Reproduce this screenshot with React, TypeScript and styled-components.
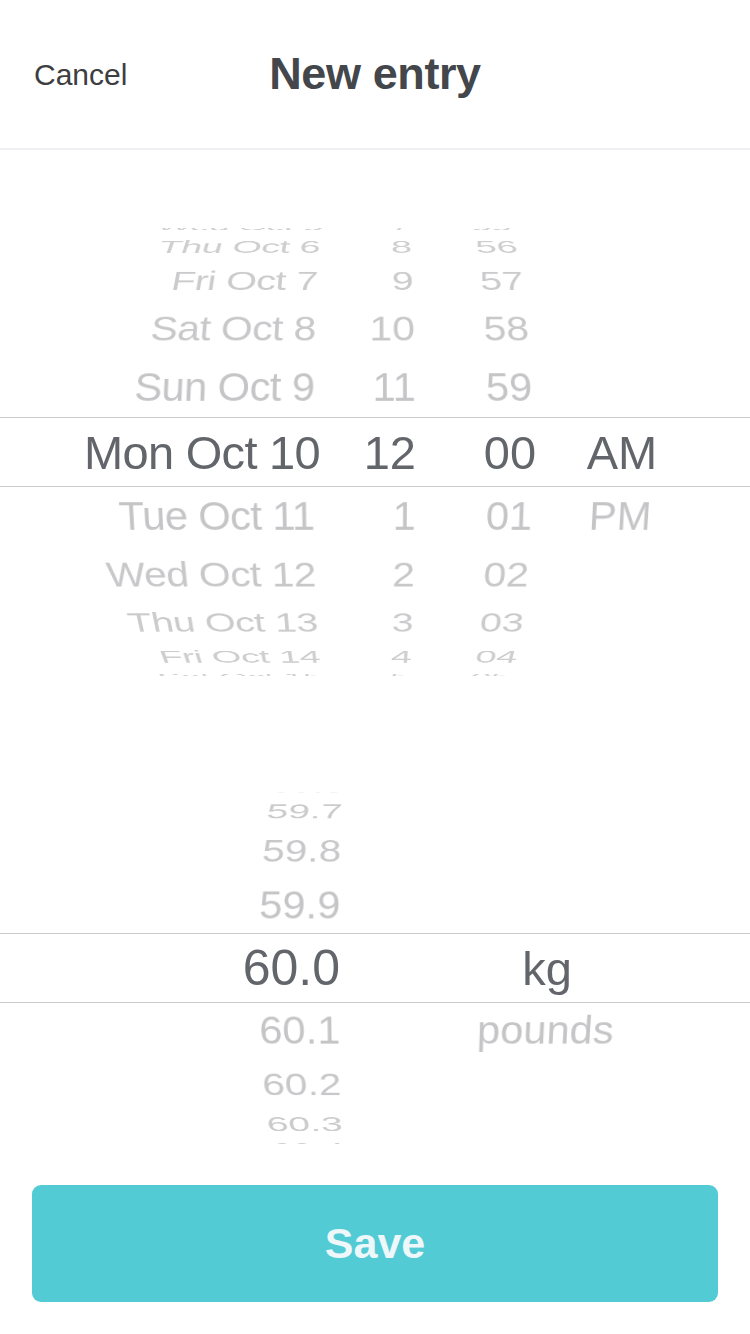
import styled, { createGlobalStyle } from 'styled-components';

const GlobalStyle = createGlobalStyle`
  html, body {
    margin: 0;
    padding: 0;
    background: #ffffff;
  }
  body {
    font-family: "Liberation Sans", Arial, sans-serif;
  }
`;

const Screen = styled.div`
  width: 750px;
  height: 1334px;
  display: flex;
  flex-direction: column;
  background: #ffffff;
  overflow: hidden;
`;

const Header = styled.header`
  height: 148px;
  display: grid;
  grid-template-columns: 1fr auto 1fr;
  align-items: center;
  border-bottom: 2px solid #f0f0f4;
  padding: 0 34px;
`;

const CancelButton = styled.button`
  justify-self: start;
  background: none;
  border: none;
  padding: 2px 0 0;
  font-family: "Liberation Sans", Arial, sans-serif;
  font-size: 30px;
  color: #3d3e42;
  cursor: pointer;
`;

const Title = styled.h1`
  margin: 0;
  font-size: 45px;
  font-weight: 700;
  color: #43464b;
  letter-spacing: -0.4px;
`;

const Wheel = styled.div<{ $height: number; $top: number }>`
  height: ${p => p.$height}px;
  margin-top: ${p => p.$top}px;
  display: grid;
  overflow: hidden;
  perspective: 1000px;
`;

const Band = styled.div<{ $height: number }>`
  grid-area: 1 / 1;
  align-self: center;
  height: ${p => p.$height}px;
  border-top: 1px solid #cbcbcb;
  border-bottom: 1px solid #cbcbcb;
`;

const Columns = styled.div`
  grid-area: 1 / 1;
  display: flex;
  transform-style: preserve-3d;
`;

const Column = styled.div<{ $width: number; $offset: number; $align: string }>`
  width: ${p => p.$width}px;
  margin-left: ${p => p.$offset}px;
  flex: none;
  display: grid;
  align-items: center;
  text-align: ${p => p.$align};
  transform-style: preserve-3d;
`;

const Item = styled.div<{ $selected: boolean; $tight: boolean; $big: number; $inset: number }>`
  grid-area: 1 / 1;
  line-height: 1;
  white-space: nowrap;
  backface-visibility: hidden;
  padding-right: ${p => (p.$selected ? 0 : p.$inset)}px;
  font-size: ${p => (p.$selected ? p.$big : 42)}px;
  letter-spacing: ${p => (p.$tight ? (p.$selected ? -0.7 : -0.6) : 0)}px;
  color: ${p => (p.$selected ? '#62656a' : '#c2c2c4')};
`;

const Footer = styled.div`
  margin-top: auto;
  padding: 0 32px 32px;
`;

const SaveButton = styled.button`
  width: 100%;
  height: 117px;
  border: none;
  border-radius: 9px;
  background: #52cbd4;
  color: #eef7f9;
  font-family: "Liberation Sans", Arial, sans-serif;
  font-size: 43px;
  font-weight: 700;
  cursor: pointer;
`;

type ColumnDef = {
  width: number;
  offset: number;
  align: string;
  tight?: boolean;
  big?: number;
  inset?: number;
  items: string[];
  selected: number;
};

type WheelDef = {
  height: number;
  top: number;
  radius: number;
  step: number;
  columns: ColumnDef[];
};

const days = ['Wed Oct 5', 'Thu Oct 6', 'Fri Oct 7', 'Sat Oct 8', 'Sun Oct 9', 'Mon Oct 10',
  'Tue Oct 11', 'Wed Oct 12', 'Thu Oct 13', 'Fri Oct 14', 'Sat Oct 15'];
const hours = ['7', '8', '9', '10', '11', '12', '1', '2', '3', '4', '5'];
const minutes = ['55', '56', '57', '58', '59', '00', '01', '02', '03', '04', '05'];
const weights = ['59.5', '59.6', '59.7', '59.8', '59.9', '60.0', '60.1', '60.2', '60.3', '60.4', '60.5'];

const dateWheel: WheelDef = {
  height: 448,
  top: 78,
  radius: 289,
  step: 13,
  columns: [
    { width: 320, offset: 0, align: 'right', tight: true, inset: 6, items: days, selected: 5 },
    { width: 96, offset: 0, align: 'right', items: hours, selected: 5 },
    { width: 100, offset: 44, align: 'center', items: minutes, selected: 5 },
    { width: 100, offset: 12, align: 'center', items: ['AM', 'PM'], selected: 0 },
  ],
};

const weightWheel: WheelDef = {
  height: 352,
  top: 116,
  radius: 220,
  step: 16.7,
  columns: [
    { width: 340, offset: 0, align: 'right', big: 50, items: weights, selected: 5 },
    { width: 200, offset: 107, align: 'center', items: ['kg', 'pounds'], selected: 0 },
  ],
};

const PickerWheel = ({ wheel }: { wheel: WheelDef }) => (
  <Wheel $height={wheel.height} $top={wheel.top}>
    <Band $height={68} />
    <Columns>
      {wheel.columns.map((col, ci) => (
        <Column key={ci} $width={col.width} $offset={col.offset} $align={col.align}>
          {col.items.map((label, i) => {
            const k = i - col.selected;
            const angle = -k * wheel.step;
            if (Math.abs(angle) >= 90) return null;
            return (
              <Item
                key={label}
                $selected={k === 0}
                $tight={!!col.tight}
                $big={col.big ?? 47}
                $inset={col.inset ?? 0}
                style={{
                  transformOrigin: `50% 50% -${wheel.radius}px`,
                  transform: `rotateX(${angle}deg)`,
                  opacity: k === 0 ? 1 : 1 - Math.abs(k) * 0.05,
                }}
              >
                {label}
              </Item>
            );
          })}
        </Column>
      ))}
    </Columns>
  </Wheel>
);

const App = () => {
  return (
    <Screen>
      <GlobalStyle />
      <Header>
        <CancelButton>Cancel</CancelButton>
        <Title>New entry</Title>
        <span />
      </Header>
      <PickerWheel wheel={dateWheel} />
      <PickerWheel wheel={weightWheel} />
      <Footer>
        <SaveButton>Save</SaveButton>
      </Footer>
    </Screen>
  );
};

export default App;
